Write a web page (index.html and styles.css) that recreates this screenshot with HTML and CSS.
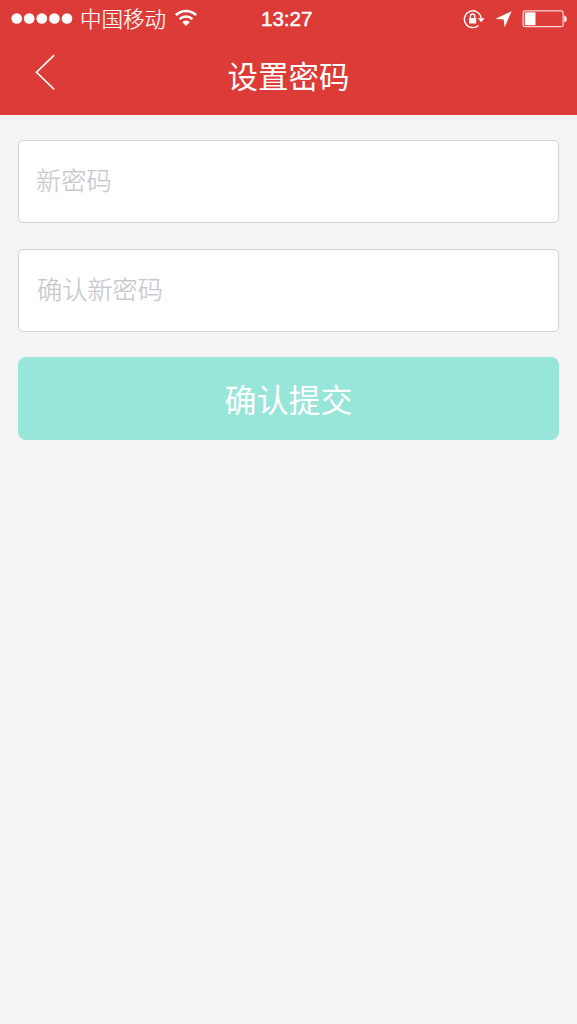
FILE: index.html
```html
<!DOCTYPE html>
<html lang="zh-CN">
<head>
<meta charset="utf-8">
<title>设置密码</title>
<link rel="stylesheet" href="styles.css">
</head>
<body>
<header class="header">
  <div class="status">
    <div class="status-left">
      <svg class="signal" width="62" height="12" viewBox="0 0 62 12"><circle cx="5.7" cy="5.5" r="5.3"/><circle cx="18.2" cy="5.5" r="5.3"/><circle cx="30.8" cy="5.5" r="5.3"/><circle cx="43.4" cy="5.5" r="5.3"/><circle cx="56" cy="5.5" r="5.3"/></svg>
      <span class="carrier">中国移动</span>
      <svg class="wifi" width="24" height="18" viewBox="0 0 24 18"><g fill="none" stroke="#fff" stroke-width="2.6"><path d="M1.9 6.2a14.3 14.3 0 0 1 20.2 0"/><path d="M5.6 10.1a9 9 0 0 1 12.8 0"/></g><path d="M12 17 8.2 13a5.4 5.4 0 0 1 7.6 0z" fill="#fff"/></svg>
    </div>
    <time class="time">13:27</time>
    <div class="status-right">
      <svg class="lock" width="22" height="20" viewBox="0 0 22 20"><path d="M15.5 16.4A8.4 8.4 0 1 1 18.1 9" fill="none" stroke="#fff" stroke-width="1.4"/><path d="M14.8 9.2h6.8l-3.4 4z" fill="#fff"/><path d="M6 9.1h7.2v5.4H6z" fill="#fff"/><path d="M7.4 9.5V7.2a2.2 2.2 0 0 1 4.4 0v2.3" fill="none" stroke="#fff" stroke-width="1.3"/></svg>
      <svg class="location" width="17" height="17" viewBox="0 0 17 17"><path d="M16.6.2 9.6 16.3 8.7 8.5.5 7.8z" fill="#fff"/></svg>
      <svg class="battery" width="46" height="18" viewBox="0 0 46 18"><rect x="1.1" y=".9" width="40" height="15.8" rx="1.8" fill="none" stroke="#fff" stroke-opacity=".8" stroke-width="1.2"/><path d="M2.8 2.4h10.7v12.8H2.8z" fill="#fff"/><path d="M42.3 5.4c3.2.3 3.2 6.5 0 6.8z" fill="#fff"/></svg>
    </div>
  </div>
  <nav class="navbar">
    <a class="back" aria-label="返回"><svg width="22" height="38" viewBox="0 0 22 38"><path d="M19.2 1.2 1.5 18.2 19.2 35.4" fill="none" stroke="#fff" stroke-width="1.6"/></svg></a>
    <h1 class="title">设置密码</h1>
  </nav>
</header>
<main class="form">
  <input class="field" type="password" placeholder="新密码">
  <input class="field field-confirm" type="password" placeholder="确认新密码">
  <button class="submit" type="button">确认提交</button>
</main>
</body>
</html>
```
FILE: styles.css
```css
* { box-sizing: border-box; }
body {
  margin: 0;
  min-height: 1024px;
  background: #f4f4f4;
  font-family: "Liberation Sans", "Noto Sans CJK SC", sans-serif;
}
svg { display: block; }
.header {
  height: 115px;
  background: #dd3b37;
  color: #fff;
}
.status {
  display: grid;
  grid-template-columns: 250px 1fr 250px;
  height: 37px;
  padding: 0 9px 0 11px;
}
.status-left, .status-right { display: flex; align-items: center; }
.status-right { justify-content: flex-end; }
.signal { fill: #fff; }
.carrier {
  margin-left: 7px;
  padding-top: 2px;
  font-size: 21.5px;
  font-weight: 300;
  line-height: 36px;
  -webkit-text-stroke: .2px #fff;
}
.wifi { margin-left: 8px; margin-bottom: 3px; }
.time {
  font-family: "Liberation Sans", sans-serif;
  font-size: 20.5px;
  line-height: 38px;
  -webkit-text-stroke: .5px #fff;
}
.location { margin-left: 10px; }
.battery { margin-left: 10px; }
.navbar {
  display: grid;
  grid-template-columns: 80px 1fr 80px;
  height: 78px;
}
.back { padding: 17px 0 0 35px; }
.title {
  margin: 0;
  padding-top: 1px;
  font-size: 30.5px;
  font-weight: 400;
  line-height: 78px;
  text-align: center;
}
.form {
  display: flex;
  flex-direction: column;
  gap: 25.5px;
  padding: 25.4px 18px 0;
}
.field {
  width: 100%;
  height: 83px;
  padding: 0 17px;
  border: 1px solid #d3d3d3;
  border-radius: 5px;
  background: #fff;
  font: 300 25.2px "Liberation Sans", "Noto Sans CJK SC", sans-serif;
  outline: 0;
}
.field::placeholder {
  color: #c7c7cc;
  opacity: 1;
  -webkit-text-stroke: .2px #c7c7cc;
}
.field-confirm { padding-left: 18px; }
.submit {
  height: 83px;
  padding: 0 0 2px;
  border: 0;
  border-radius: 8px;
  background: #98e5da;
  color: #fff;
  font: 400 32px "Liberation Sans", "Noto Sans CJK SC", sans-serif;
}
```
